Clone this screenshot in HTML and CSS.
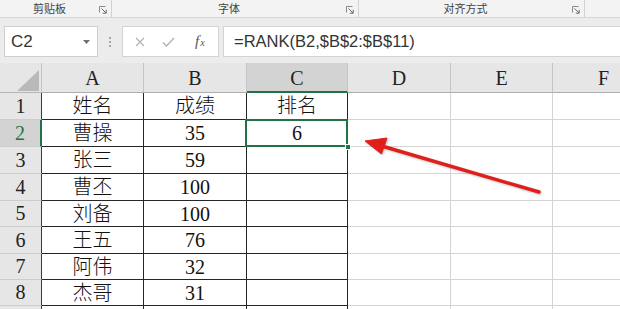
FILE: index.html
```html
<!DOCTYPE html>
<html lang="zh">
<head>
<meta charset="utf-8">
<link rel="stylesheet" href="styles.css">
</head>
<body>
<div class="app">
  <div class="ribbon">
    <div class="grp g1"><span class="lbl">剪贴板</span><svg class="launch" width="8" height="8" viewBox="0 0 8 8"><path d="M0.5 6.5V0.5H6.5" fill="none" stroke="#8a8a8a"/><path d="M2.5 2.5L7 7M7.2 3.8V7.2H3.8" fill="none" stroke="#6a6a6a"/></svg></div>
    <div class="grp g2"><span class="lbl">字体</span><svg class="launch" width="8" height="8" viewBox="0 0 8 8"><path d="M0.5 6.5V0.5H6.5" fill="none" stroke="#8a8a8a"/><path d="M2.5 2.5L7 7M7.2 3.8V7.2H3.8" fill="none" stroke="#6a6a6a"/></svg></div>
    <div class="grp g3"><span class="lbl">对齐方式</span><svg class="launch" width="8" height="8" viewBox="0 0 8 8"><path d="M0.5 6.5V0.5H6.5" fill="none" stroke="#8a8a8a"/><path d="M2.5 2.5L7 7M7.2 3.8V7.2H3.8" fill="none" stroke="#6a6a6a"/></svg></div>
    <div class="grp g4"></div>
  </div>
  <div class="fbar">
    <div class="namebox"><span class="ref">C2</span><svg class="caret" width="7" height="4" viewBox="0 0 7 4"><path d="M0 0H7L3.5 4Z" fill="#707070"/></svg></div>
    <div class="grip"><i></i><i></i><i></i></div>
    <div class="fxbtns">
      <svg class="btn" width="10" height="10" viewBox="0 0 10 10"><path d="M1 1L9 9M9 1L1 9" stroke="#b4b4b4" stroke-width="1.3"/></svg>
      <svg class="btn" width="13" height="10" viewBox="0 0 13 10"><path d="M1 5.5L4.5 9L12 1" fill="none" stroke="#b4b4b4" stroke-width="1.5"/></svg>
      <span class="fx"><span class="f">f</span><span class="x">x</span></span>
    </div>
    <div class="formula">=RANK(B2,$B$2:$B$11)</div>
  </div>
  <div class="sheet">
    <div class="corner"><svg width="42" height="30" viewBox="0 0 42 30"><path d="M17 28H39V7Z" fill="#b9b9b9"/></svg></div>
    <div class="ch">A</div><div class="ch">B</div><div class="ch csel">C</div><div class="ch">D</div><div class="ch">E</div><div class="ch">F</div>

    <div class="rh">1</div><div class="c d">姓名</div><div class="c d">成绩</div><div class="c d">排名</div><div class="c g"></div><div class="c g"></div><div class="c g"></div>
    <div class="rh rsel">2</div><div class="c d">曹操</div><div class="c d">35</div><div class="c d sel">6<span class="selbox"></span><span class="handle"></span></div><div class="c g"></div><div class="c g"></div><div class="c g"></div>
    <div class="rh">3</div><div class="c d">张三</div><div class="c d">59</div><div class="c d"></div><div class="c g"></div><div class="c g"></div><div class="c g"></div>
    <div class="rh">4</div><div class="c d">曹丕</div><div class="c d">100</div><div class="c d"></div><div class="c g"></div><div class="c g"></div><div class="c g"></div>
    <div class="rh">5</div><div class="c d">刘备</div><div class="c d">100</div><div class="c d"></div><div class="c g"></div><div class="c g"></div><div class="c g"></div>
    <div class="rh">6</div><div class="c d">王五</div><div class="c d">76</div><div class="c d"></div><div class="c g"></div><div class="c g"></div><div class="c g"></div>
    <div class="rh">7</div><div class="c d">阿伟</div><div class="c d">32</div><div class="c d"></div><div class="c g"></div><div class="c g"></div><div class="c g"></div>
    <div class="rh">8</div><div class="c d">杰哥</div><div class="c d">31</div><div class="c d"></div><div class="c g"></div><div class="c g"></div><div class="c g"></div>
    <div class="rh"></div><div class="c d"></div><div class="c d"></div><div class="c d"></div><div class="c g"></div><div class="c g"></div><div class="c g"></div>
  </div>
  <svg class="arrow" width="620" height="309" viewBox="0 0 620 309">
    <line x1="539" y1="192" x2="380" y2="145.5" stroke="#e01f1b" stroke-width="3.4" stroke-linecap="round"/>
    <path d="M365 141L387 138L381.5 154Z" fill="#e01f1b" stroke="#e01f1b" stroke-width="1" stroke-linejoin="round"/>
  </svg>
</div>
</body>
</html>
```

FILE: styles.css
```css
* { box-sizing: border-box; }
html, body { margin: 0; padding: 0; background: #fff; }
.app {
  position: relative;
  width: 620px;
  height: 309px;
  overflow: hidden;
  font-family: "Liberation Sans", "Noto Sans CJK SC", sans-serif;
}

/* ribbon group labels */
.ribbon {
  display: flex;
  height: 18px;
  background: #f3f3f3;
  border-bottom: 1px solid #d6d6d6;
}
.grp {
  display: flex;
  align-items: center;
  border-right: 1px solid #d2d2d2;
  padding-right: 3px;
}
.g1 { width: 112px; }
.g2 { width: 247px; }
.g3 { width: 226px; padding-right: 3px; }
.g4 { flex: 1; border-right: none; }
.lbl {
  flex: 1;
  text-align: center;
  font-family: "Noto Sans CJK SC", sans-serif;
  font-size: 11px;
  color: #444;
  line-height: 17px;
  margin-top: -1px;
}
.launch { display: block; margin-top: 2px; margin-right: 1px; }

/* formula bar */
.fbar {
  display: flex;
  align-items: flex-start;
  height: 45px;
  background: #ececec;
  padding-top: 8px;
}
.namebox {
  display: flex;
  align-items: center;
  justify-content: space-between;
  width: 94px;
  height: 31px;
  margin-left: 4px;
  background: #fff;
  border: 1px solid #cfcfcf;
  padding: 0 7px 0 6px;
}
.ref { font-size: 17px; color: #333; }
.grip {
  width: 24px;
  height: 31px;
  display: flex;
  flex-direction: column;
  align-items: center;
  justify-content: center;
  gap: 2px;
}
.grip i {
  display: block;
  width: 2px;
  height: 2px;
  background: #a8a8a8;
}
.fxbtns {
  display: flex;
  align-items: center;
  width: 97px;
  height: 31px;
  background: #fff;
  border: 1px solid #d3d3d3;
  padding-left: 12px;
}
.fxbtns .btn { margin-right: 17px; }
.fxbtns .btn + .btn { margin-right: 20px; }
.fx {
  font-family: "Liberation Serif", serif;
  font-style: italic;
  color: #555;
  display: flex;
  align-items: baseline;
}
.fx .f { font-size: 15px; }
.fx .x { font-size: 10px; margin-left: 1px; }
.formula {
  flex: 1;
  height: 31px;
  margin-left: 4px;
  background: #fff;
  border: 1px solid #d3d3d3;
  border-right: none;
  padding-left: 10px;
  font-size: 16.5px;
  line-height: 29px;
  color: #333;
  white-space: nowrap;
}

/* sheet grid */
.sheet {
  display: grid;
  grid-template-columns: 42px 102px 103px 101px 103px 102px 102px;
  grid-template-rows: 30px 27px 27px 27px 27px 26px 27px 26px 26px 30px;
  font-family: "Liberation Serif", "Noto Sans CJK SC", serif;
  font-size: 20px;
  font-weight: 300;
  color: #111;
}
.corner {
  background: #e6e6e6;
  border-right: 1px solid #c4c4c4;
  border-bottom: 1px solid #b5b5b5;
}
.corner svg { display: block; }
.ch {
  background: #e6e6e6;
  border-right: 1px solid #c4c4c4;
  border-bottom: 1px solid #adadad;
  display: flex;
  align-items: center;
  justify-content: center;
  padding-top: 2px;
  color: #222;
  font-weight: 400;
}
.ch.csel {
  background: #d3d3d3;
  border-bottom: 2px solid #217346;
}
.rh {
  background: #e6e6e6;
  border-right: 1px solid #3a3a3a;
  border-bottom: 1px solid #cdcdcd;
  display: flex;
  align-items: center;
  justify-content: center;
  color: #222;
  font-weight: 400;
}
.rh.rsel {
  background: #d3d3d3;
  color: #217346;
  border-right: 2px solid #217346;
}
.c {
  display: flex;
  align-items: center;
  justify-content: center;
  line-height: 1;
}
.c.d {
  border-right: 1px solid #262626;
  border-bottom: 1px solid #262626;
}
.c.g {
  border-right: 1px solid #d4d4d4;
  border-bottom: 1px solid #d4d4d4;
}
.c.sel { position: relative; }
.selbox {
  position: absolute;
  left: -2px;
  top: -1px;
  right: -1px;
  bottom: -1px;
  border: 2px solid #217346;
}
.handle {
  position: absolute;
  right: -4px;
  bottom: -4px;
  width: 6px;
  height: 6px;
  background: #217346;
  border: 1px solid #fff;
}

.arrow {
  position: absolute;
  left: 0;
  top: 0;
  pointer-events: none;
  filter: drop-shadow(1px 1px 1px rgba(0,0,0,0.25));
}
```
